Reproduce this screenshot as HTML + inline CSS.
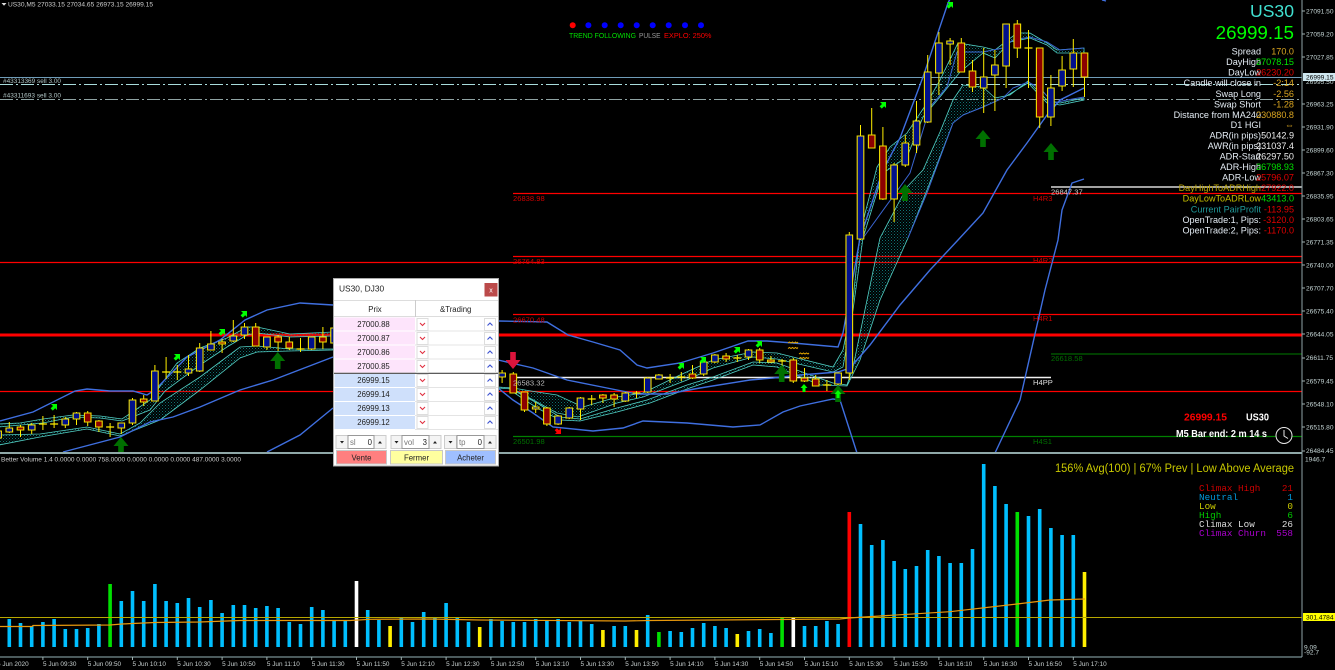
<!DOCTYPE html>
<html><head><meta charset="utf-8"><title>US30 M5</title>
<style>
html,body{margin:0;padding:0;background:#000;width:1335px;height:670px;overflow:hidden}
svg{display:block;font-family:"Liberation Sans",sans-serif}
.ax text{font-size:6.6px;fill:#c4d4d4}
.xl text{font-size:6.4px;fill:#c8d0d0}
.r text{font-size:9.1px;text-anchor:end}
.lv text{font-size:7.6px}
.lg text{font-family:"Liberation Mono",monospace;font-size:9.3px}
.d text{font-size:7.8px;fill:#222;text-anchor:middle}
</style></head><body>
<svg width="1335" height="670" viewBox="0 0 1335 670" xmlns="http://www.w3.org/2000/svg">
<defs>
<pattern id="dots" width="3" height="3" patternUnits="userSpaceOnUse"><rect x="0" y="0" width="1" height="1" fill="#0f7272"/><rect x="1.5" y="1.5" width="1" height="1" fill="#0a5656"/></pattern>
<path id="ua" d="M0 0L7.5 9H2.800V17H-2.800V9H-7.500Z" fill="#007000"/>
<path id="ga" d="M-3 -3H3V3L1.2 1.2-1.2 3.6-3.4 1.4-1 -1Z" fill="#00ff00"/>
</defs>
<rect width="1335" height="670" fill="#000"/>

<!-- horizontal levels -->
<g fill="none">
<path d="M0 77.5H1302" stroke="#6f9cb8"/>
<path d="M0 84.5H1302" stroke="#a8dcdc" stroke-width="0.9" stroke-dasharray="13 3 2 3"/>
<path d="M0 99.5H1302" stroke="#8fa3a3" stroke-width="0.9" stroke-dasharray="13 3 2 3"/>
<path d="M513 193.5H1302M513 256.5H1302M513 314.5H1302" stroke="#f00" stroke-width="1.2"/>
<path d="M0 262.5H1302M0 391.5H1302" stroke="#f00" stroke-width="1.2"/>
<path d="M0 335H1302" stroke="#f00" stroke-width="3"/>
<path d="M1051 187H1302" stroke="#d8d8d8" stroke-width="1.6"/>
<path d="M1051 354H1302" stroke="#006400" stroke-width="1.2"/>
<path d="M513 377.5H1051" stroke="#f0f0f0" stroke-width="1.4"/>
<path d="M513 436.5H1302" stroke="#008000" stroke-width="1.2"/>
</g>

<!-- ribbons -->
<g fill="url(#dots)" stroke="#52cfc4" stroke-width="0.8">
<path d="M-1 424L20 423 43 419 73 415 100 416 122 419 150 400 177 363 200 348 227 338 247 327 257 327 290 334 333 332L333 336 290 337 257 333 247 335 227 347 200 365 165 391 150 410 122 421 100 418 73 417 43 423-1 427Z"/>
<path d="M-1 435L40 434 87 427 120 434 140 423 160 403 200 377 240 347 257 346 290 349 333 349L333 350 290 351 257 352 240 358 200 390 160 420 120 436 87 429 40 437-1 445Z"/>
<path d="M498 387L513 388 537 392 557 395 583 407 617 397 643 393 680 375 713 360 753 352 777 353 833 367 843 350 853 300 860 233 877 167 890 147 907 133 927 103 940 80 958 43 983 47 995 50 1017 33 1030 33 1047 43 1057 50 1084 48L1084 53 1057 53 1047 45 1030 38 1010 42 995 58 983 53 960 72 940 97 923 117 907 157 883 173 863 238 853 310 843 367 833 372 777 359 753 357 713 368 687 380 643 397 617 403 578 417 557 413 537 402 513 389 498 388Z"/>
<path d="M513 390L537 403 560 417 580 419 617 408 647 400 687 385 713 377 753 362 777 363 833 383 847 385 853 367 880 238 907 187 923 170 940 132 953 100 963 85 983 87 995 98 1010 95 1028 81 1047 100 1060 103 1084 98L1084 100 1060 105 1047 103 1028 83 1003 98 983 107 963 115 953 123 927 190 908 238 880 300 860 360 847 386 820 385 777 367 753 365 713 380 687 389 650 403 617 412 580 421 560 420 537 408 513 392Z"/>
</g>

<!-- bollinger / MA -->
<g fill="none" stroke="#3f6fe0" stroke-width="1.4">
<path d="M0 421L33 412 75 391 87 389 110 391 133 391 147 395 155 390 187 357 220 340 245 320 267 310 300 303 333 305"/>
<path d="M498 321L547 322 568 335 593 342 620 350 637 365 647 368 680 363 713 353 748 341 767 341 793 343 838 347 843 333 849 300 860 238 883 170 900 138 923 77 948 3 951 -3"/>
<path d="M63 452L120 437 150 422 173 417 200 407 240 390 273 380 333 357"/>
<path d="M498 360L533 368 567 380 607 388 637 394 667 394 700 388 750 380 773 378 800 375 838 372 850 368 870 345 900 305 930 270 958 240 983 213 1007 170 1027 143 1047 115 1060 100 1084 88"/>
<path d="M267 452L300 435 333 408"/>
<path d="M498 388L513 400 533 413 553 427 593 431 623 428 643 421 687 423 733 427 760 425 783 412 800 406 833 399 840 400 857 453"/>
<path d="M995 453L1020 400 1045 290 1058 240 1062 210 1072 183 1084 179"/>
<path d="M1102 0L1106 1"/>
</g>
<path fill="none" stroke="#3a64d0" stroke-width="1" d="M863 238L910 173 930 107 947 87 957 52 983 52 1003 48 1013 40 1030 37 1047 42 1060 50 1084 48M908 238L927 193 953 123 963 115 983 107 1003 98 1013 88 1028 82 1040 88 1053 103 1067 100 1084 97"/>

<!-- wicks -->
<path fill="none" stroke="#ffee00" stroke-width="1" d="M9.3 422V433M20.5 425V437M31.7 423V434M42.9 416V430M54.1 415V428M65.3 417V428M76.5 412V425M87.7 411V426M98.9 420V432M110.1 423V437M121.3 423V434M132.5 398V425M143.7 395V406M154.9 365V401M166.1 357V379M177.3 365V380M188.5 355V376M199.7 343V372M210.9 331V350M222.1 339V353M233.3 320V342M244.5 323V339M255.7 323V346M266.9 337V350M278.1 335V351M289.3 337V350M300.5 338V352M311.7 337V350M322.9 327V349M502.1 370V383M513.3 372V393M524.5 392V412M535.7 402V413M546.9 407V426M558.1 415V425M569.3 407V419M580.5 397V420M591.7 395V405M602.9 394V403M614.1 393V407M625.3 392V402M636.5 391V398M647.7 377V393M658.9 374V379M670.1 374V383M681.3 372V381M692.5 365V379M703.7 357V376M714.9 354V363M726.1 353V362M737.3 355V362M748.5 349V360M759.7 348V363M770.9 356V363M782.1 359V368M793.3 358V383M804.5 368V382M815.7 375V386M826.9 380V391M838.1 373V385M849.3 232V380M860.5 125V240M871.7 108V148M882.9 127V200M894.1 163V222M905.3 135V167M916.5 101V153M927.7 55V123M938.9 32V95M950.1 38V65M961.3 38V72M972.5 60V92M983.7 48V113M994.9 50V111M1006.1 24V88M1017.3 20V58M1028.5 30V88M1039.7 48V128M1050.9 75V126M1062.1 56V91M1073.3 39V87M1084.5 53V97"/>
<!-- dojis -->
<path fill="none" stroke="#ffee00" stroke-width="1.2" d="M38.9 424h8M50.1 424h8M106.1 427h8M162.1 372h8M173.3 372h8M296.5 349h8M587.7 399h8M632.5 393h8M666.1 378h8M677.3 377h8M733.3 358h8M778.1 361h8M822.9 385h8M1024.5 48h8"/>
<!-- blue bodies -->
<path fill="#00108c" stroke="#f2e000" stroke-width="1.1" d="M-5.2 431h6.6v7h-6.6zM6 428h6.6v4h-6.6zM28.4 425h6.6v5h-6.6zM62 419h6.6v6h-6.6zM73.2 413h6.6v6h-6.6zM118 423h6.6v5h-6.6zM129.2 400h6.6v23h-6.6zM151.6 371h6.6v30h-6.6zM185.2 369h6.6v4h-6.6zM196.4 348h6.6v23h-6.6zM207.6 344h6.6v6h-6.6zM230 336h6.6v5h-6.6zM241.2 327h6.6v8h-6.6zM263.6 337h6.6v10h-6.6zM308.4 337h6.6v12h-6.6zM330.8 328h6.6v15h-6.6zM498.8 373h6.6v4h-6.6zM532.4 407h6.6v2h-6.6zM554.8 416h6.6v8h-6.6zM566 408h6.6v10h-6.6zM577.2 398h6.6v11h-6.6zM622 393h6.6v8h-6.6zM644.4 378h6.6v14h-6.6zM655.6 375h6.6v4h-6.6zM700.4 362h6.6v12h-6.6zM711.6 355h6.6v7h-6.6zM745.2 350h6.6v7h-6.6zM834.8 373h6.6v11h-6.6zM846 235h6.6v138h-6.6zM857.2 136h6.6v103h-6.6zM890.8 165h6.6v34h-6.6zM902 143h6.6v22h-6.6zM913.2 121h6.6v24h-6.6zM924.4 72h6.6v50h-6.6zM935.6 43h6.6v30h-6.6zM946.8 41h6.6v3h-6.6zM980.4 77h6.6v11h-6.6zM991.6 65h6.6v10h-6.6zM1002.8 24h6.6v42h-6.6zM1047.6 88h6.6v29h-6.6zM1058.8 70h6.6v16h-6.6zM1070 53h6.6v16h-6.6z"/>
<!-- red bodies -->
<path fill="#8c0000" stroke="#f2e000" stroke-width="1.1" d="M17.2 427h6.6v3h-6.6zM84.4 413h6.6v9h-6.6zM95.6 421h6.6v6h-6.6zM140.4 399h6.6v3h-6.6zM218.8 342h6.6v2h-6.6zM252.4 327h6.6v19h-6.6zM274.8 337h6.6v5h-6.6zM286 342h6.6v6h-6.6zM319.6 337h6.6v5h-6.6zM510 374h6.6v19h-6.6zM521.2 392h6.6v18h-6.6zM543.6 408h6.6v16h-6.6zM599.6 395h6.6v3h-6.6zM610.8 395h6.6v4h-6.6zM689.2 374h6.6v4h-6.6zM722.8 356h6.6v3h-6.6zM756.4 350h6.6v10h-6.6zM767.6 360h6.6v2h-6.6zM790 360h6.6v21h-6.6zM801.2 378h6.6v3h-6.6zM812.4 379h6.6v7h-6.6zM868.4 135h6.6v13h-6.6zM879.6 146h6.6v53h-6.6zM958 43h6.6v29h-6.6zM969.2 71h6.6v16h-6.6zM1014 24h6.6v24h-6.6zM1036.4 48h6.6v69h-6.6zM1081.2 53h6.6v24h-6.6z"/>

<!-- level labels -->
<g class="lv">
<text x="513" y="201" fill="#d00000">26838.98</text>
<text x="513" y="264" fill="#d00000">26764.83</text>
<text x="513" y="322.5" fill="#d00000">26670.48</text>
<text x="513" y="385.500" fill="#bbb">26583.32</text>
<text x="513" y="444" fill="#007000">26501.98</text>
<text x="1033" y="201" fill="#d00000">H4R3</text>
<text x="1033" y="263" fill="#d00000">H4R2</text>
<text x="1033" y="321" fill="#d00000">H4R1</text>
<text x="1033" y="385" fill="#ddd">H4PP</text>
<text x="1033" y="444" fill="#007000">H4S1</text>
<text x="1051" y="194.500" fill="#ccc">26847.37</text>
<text x="1051" y="361" fill="#007000">26618.58</text>
</g>

<!-- arrows -->
<use href="#ua" x="121" y="437"/><use href="#ua" x="277.7" y="352"/><use href="#ua" x="781.7" y="365"/><use href="#ua" x="838" y="385"/><use href="#ua" x="983" y="130"/><use href="#ua" x="1051" y="143"/><use href="#ua" x="905" y="184"/>
<path d="M513 369L505.5 360H510.2V352H515.8V360H520.5Z" fill="#dc143c"/>
<use href="#ga" x="54" y="407"/><use href="#ga" x="177" y="357"/><use href="#ga" x="222" y="332"/><use href="#ga" x="244" y="314"/><use href="#ga" x="681" y="366"/><use href="#ga" x="703" y="360"/><use href="#ga" x="737" y="350"/><use href="#ga" x="759" y="344"/><use href="#ga" x="950" y="5"/><use href="#ga" x="883" y="105"/>
<path d="M555 428h6v6l-1.7-1.7-2 2-2.2-2.2 2-2z" fill="#f00" transform="rotate(90 558 431)"/>
<path d="M804 384l3.5 4h-2v4h-3v-4h-2zM838 390l3.5 4h-2v4h-3v-4h-2z" fill="#00ff00"/>
<path fill="none" stroke="#e6a800" stroke-width="1" d="M788 343l1.5-1 1.500 1 1.500-1 1.500 1 1.500-1 1.500 1 1 -1M788 348.500l1.500-1 1.500 1 1.500-1 1.500 1 1.500-1 1.500 1 1-1M799 354l1.500-1 1.500 1 1.500-1 1.500 1 1.500-1 1.500 1 1-1M799 358.500l1.500-1 1.500 1 1.500-1 1.500 1 1.500-1 1.500 1 1-1"/>

<!-- top center dots -->
<circle cx="572.700" cy="25.300" r="3" fill="#f00"/>
<g fill="#0000ff"><circle cx="588.400" cy="25.300" r="3"/><circle cx="604.700" cy="25.300" r="3"/><circle cx="620.700" cy="25.300" r="3"/><circle cx="636.700" cy="25.300" r="3"/><circle cx="652.700" cy="25.300" r="3"/><circle cx="668.700" cy="25.300" r="3"/><circle cx="685" cy="25.300" r="3"/><circle cx="701" cy="25.300" r="3"/></g>
<g font-size="7.400"><text x="569" y="37.800" fill="#00e000" textLength="67" lengthAdjust="spacingAndGlyphs">TREND FOLLOWING</text><text x="639" y="37.800" fill="#999" textLength="21.500" lengthAdjust="spacingAndGlyphs">PULSE</text><text x="664" y="37.800" fill="#f00" textLength="47.500" lengthAdjust="spacingAndGlyphs">EXPLO: 250%</text></g>

<!-- top left -->
<path d="M1.500 3H6.500L4 5.800Z" fill="#ddd"/>
<text x="8" y="6.300" font-size="6.800" fill="#ccc" textLength="145" lengthAdjust="spacingAndGlyphs">US30,M5  27033.15 27034.65 26973.15 26999.15</text>
<text x="3" y="83" font-size="6.500" fill="#b0c4c4" textLength="58" lengthAdjust="spacingAndGlyphs">#43313369 sell 3.00</text>
<text x="3" y="97.500" font-size="6.500" fill="#b0c4c4" textLength="58" lengthAdjust="spacingAndGlyphs">#43311693 sell 3.00</text>

<!-- right info panel -->
<text x="1294" y="17" font-size="17.600" fill="#40e0d0" text-anchor="end">US30</text>
<text x="1294" y="39" font-size="18.800" fill="#00ff00" text-anchor="end">26999.15</text>
<g class="r" fill="#e4ecf4">
<text x="1261" y="54.500">Spread</text><text x="1261" y="65">DayHigh</text><text x="1261" y="75.500">DayLow</text><text x="1261" y="86">Candle will close in</text><text x="1261" y="97">Swap Long</text><text x="1261" y="107.500">Swap Short</text><text x="1261" y="118">Distance from MA240</text><text x="1261" y="128">D1 HGI</text><text x="1261" y="138.500">ADR(in pips)</text><text x="1261" y="149">AWR(in pips)</text><text x="1261" y="159.500">ADR-Start</text><text x="1261" y="170">ADR-High</text><text x="1261" y="180.500">ADR-Low</text>
<text x="1261" y="191" fill="#b8a000">DayHighToADRHigh</text><text x="1261" y="201.500" fill="#c8c000">DayLowToADRLow</text><text x="1261" y="212.500" fill="#1f9a9a">Current PairProfit</text>
<text x="1261" y="223">OpenTrade:1, Pips:</text><text x="1261" y="233.500">OpenTrade:2, Pips:</text>
</g>
<g class="r">
<text x="1294" y="54.500" fill="#daa520">170.0</text><text x="1294" y="65" fill="#00e800">27078.15</text><text x="1294" y="75.500" fill="#e00000">26230.20</text><text x="1294" y="86" fill="#daa520">-2:14</text><text x="1294" y="97" fill="#daa520">-2.56</text><text x="1294" y="107.500" fill="#daa520">-1.28</text><text x="1294" y="118" fill="#daa520">230880.8</text><text x="1294" y="128" fill="#daa520">⇔</text><text x="1294" y="138.500" fill="#eee">50142.9</text><text x="1294" y="149" fill="#eee">231037.4</text><text x="1294" y="159.500" fill="#eee">26297.50</text><text x="1294" y="170" fill="#00e000">26798.93</text><text x="1294" y="180.500" fill="#e00000">25796.07</text><text x="1294" y="191" fill="#e00000">-27922.0</text><text x="1294" y="201.500" fill="#00e000">43413.0</text><text x="1294" y="212.500" fill="#e00000">-113.95</text><text x="1294" y="223" fill="#e00000">-3120.0</text><text x="1294" y="233.500" fill="#e00000">-1170.0</text>
</g>

<!-- bottom right of main -->
<g font-weight="bold" font-size="10.500">
<text x="1184" y="420.500" fill="#f00" textLength="43" lengthAdjust="spacingAndGlyphs">26999.15</text>
<text x="1246" y="420.500" fill="#fff" textLength="23" lengthAdjust="spacingAndGlyphs">US30</text>
<text x="1176" y="437" fill="#fff" textLength="91" lengthAdjust="spacingAndGlyphs">M5 Bar end: 2 m 14 s</text>
</g>
<circle cx="1284" cy="435.500" r="8" fill="#000" stroke="#e8e8e8" stroke-width="1"/>
<path d="M1284 430V436L1288 438.500" fill="none" stroke="#e8e8e8"/>

<!-- frame -->
<path d="M0 453H1302" stroke="#8fa8a8" stroke-width="2"/>
<path d="M0 657H1302" stroke="#64787a" stroke-width="1.500"/>
<path d="M1302 0V657" stroke="#8fa3a8" stroke-width="1"/>

<!-- right axis -->
<path stroke="#9fb0b0" d="M1302 11h3M1302 34h3M1302 57h3M1302 104h3M1302 127h3M1302 150h3M1302 173h3M1302 196h3M1302 219h3M1302 242h3M1302 265h3M1302 288h3M1302 311h3M1302 334h3M1302 358h3M1302 381h3M1302 404h3M1302 427h3M1302 451h3"/>
<g class="ax">
<text x="1306" y="13.300">27091.50</text><text x="1306" y="36.300">27059.20</text><text x="1306" y="59.300">27027.85</text><text x="1306" y="84">26995.50</text><text x="1306" y="106.300">26963.25</text><text x="1306" y="129.300">26931.90</text><text x="1306" y="152.300">26899.60</text><text x="1306" y="175.300">26867.30</text><text x="1306" y="198.300">26835.95</text><text x="1306" y="221.300">26803.65</text><text x="1306" y="244.600">26771.35</text><text x="1306" y="267.300">26740.00</text><text x="1306" y="290.300">26707.70</text><text x="1306" y="313.300">26675.40</text><text x="1306" y="336.600">26644.05</text><text x="1306" y="360">26611.75</text><text x="1306" y="383.300">26579.45</text><text x="1306" y="406.300">26548.10</text><text x="1306" y="429.300">26515.80</text><text x="1306" y="453">26484.45</text>
<text x="1305" y="461.300">1946.7</text><text x="1304" y="649.300">9.09</text><text x="1304" y="654.300">-92.7</text>
</g>
<rect x="1303" y="73" width="32" height="8" fill="#cfe8f0"/>
<text x="1306" y="79.300" font-size="6.600" fill="#000">26999.15</text>
<rect x="1303" y="613" width="32" height="8" fill="#ffff00"/>
<text x="1306" y="619.300" font-size="6.600" fill="#000">301.4784</text>

<!-- subwindow title -->
<text x="1" y="461.500" font-size="6.600" fill="#ccc" textLength="240" lengthAdjust="spacingAndGlyphs">Better Volume 1.4 0.0000 0.0000 758.0000 0.0000 0.0000 0.0000 487.0000 3.0000</text>
<text x="1055" y="472" font-size="11.500" fill="#c8c800" textLength="239" lengthAdjust="spacingAndGlyphs">156% Avg(100) | 67% Prev | Low Above Average</text>
<g class="lg">
<text x="1199" y="491" fill="#cc0000">Climax High</text><text x="1293" y="491" fill="#cc0000" text-anchor="end">21</text>
<text x="1199" y="500" fill="#0099dd">Neutral</text><text x="1293" y="500" fill="#0099dd" text-anchor="end">1</text>
<text x="1199" y="509" fill="#cccc00">Low</text><text x="1293" y="509" fill="#cccc00" text-anchor="end">0</text>
<text x="1199" y="518" fill="#00cc00">High</text><text x="1293" y="518" fill="#00cc00" text-anchor="end">6</text>
<text x="1199" y="527" fill="#ddd">Climax Low</text><text x="1293" y="527" fill="#ddd" text-anchor="end">26</text>
<text x="1199" y="536" fill="#aa00cc">Climax Churn</text><text x="1293" y="536" fill="#aa00cc" text-anchor="end">558</text>
</g>

<!-- volume bars -->
<path fill="none" stroke="#00bfff" stroke-width="3.600" d="M9.300 647V619M20.500 647V623M31.700 647V626M42.900 647V622M54.100 647V619M65.300 647V629M76.500 647V629M87.700 647V628M98.900 647V624M121.300 647V601M132.500 647V591M143.700 647V601M154.900 647V584M166.100 647V601M177.300 647V603M188.500 647V598M199.700 647V607M210.900 647V600M222.100 647V613M233.300 647V605M244.500 647V605M255.700 647V608M266.900 647V606M278.100 647V608M289.300 647V622M300.500 647V624M311.700 647V607M322.900 647V610M334.100 647V620M345.300 647V620M367.700 647V610M378.900 647V620M401.300 647V618M412.500 647V622M423.700 647V612M434.900 647V617M446.100 647V603M457.300 647V618M468.500 647V622M490.900 647V619M502.100 647V621M513.300 647V622M524.500 647V622M535.700 647V619M546.900 647V621M558.100 647V619M569.300 647V622M580.500 647V621M591.700 647V624M614.100 647V626M625.300 647V626M647.700 647V615M670.100 647V631M681.300 647V632M692.500 647V628M703.700 647V623M714.900 647V626M726.100 647V628M748.500 647V631M759.700 647V629M770.900 647V633M804.500 647V626M815.700 647V626M826.900 647V621M838.100 647V624M860.500 647V524M871.700 647V545M882.900 647V540M894.100 647V561M905.300 647V569M916.500 647V566M927.700 647V550M938.900 647V556M950.100 647V563M961.300 647V563M972.500 647V549M983.700 647V464M994.900 647V486M1006.100 647V504M1028.500 647V516M1039.700 647V509M1050.900 647V528M1062.100 647V535M1073.300 647V535"/>
<path fill="none" stroke="#00e000" stroke-width="3.600" d="M110.100 647V584M658.900 647V632M782.100 647V617M1017.300 647V512"/>
<path fill="none" stroke="#ffffff" stroke-width="3.600" d="M356.500 647V581M793.300 647V618"/>
<path fill="none" stroke="#ffee00" stroke-width="3.600" d="M390.100 647V626M479.700 647V627M602.900 647V630M636.500 647V630M737.300 647V634M1084.500 647V572"/>
<path fill="none" stroke="#f00" stroke-width="3.600" d="M849.300 647V512"/>
<path d="M0 617.500H1302" stroke="#b8a800" stroke-width="1"/>
<path fill="none" stroke="#e8980c" stroke-width="1.200" d="M0 626.500L32 626.500 33 625.500 110 625 122 624 155 622.500 200 622 240 620.500 350 620.500 370 619.300 430 619 480 620 625 621 650 620.500 840 619 849 618 880 616 950 611.700 1017 604 1050 600 1085 599"/>

<!-- x axis -->
<path stroke="#9fb0b0" d="M42.900 657v3M87.700 657v3M132.500 657v3M177.300 657v3M222.100 657v3M266.900 657v3M311.700 657v3M356.500 657v3M401.300 657v3M446.100 657v3M490.900 657v3M535.700 657v3M580.500 657v3M625.300 657v3M670.100 657v3M714.900 657v3M759.700 657v3M804.500 657v3M849.300 657v3M894.100 657v3M938.900 657v3M983.700 657v3M1028.500 657v3M1073.300 657v3"/>
<g class="xl">
<text x="-3" y="666">5 Jun 2020</text><text x="43" y="666">5 Jun 09:30</text><text x="87.700" y="666">5 Jun 09:50</text><text x="132.500" y="666">5 Jun 10:10</text><text x="177.300" y="666">5 Jun 10:30</text><text x="222.100" y="666">5 Jun 10:50</text><text x="266.900" y="666">5 Jun 11:10</text><text x="311.700" y="666">5 Jun 11:30</text><text x="356.500" y="666">5 Jun 11:50</text><text x="401.300" y="666">5 Jun 12:10</text><text x="446.100" y="666">5 Jun 12:30</text><text x="490.900" y="666">5 Jun 12:50</text><text x="535.700" y="666">5 Jun 13:10</text><text x="580.500" y="666">5 Jun 13:30</text><text x="625.300" y="666">5 Jun 13:50</text><text x="670.100" y="666">5 Jun 14:10</text><text x="714.900" y="666">5 Jun 14:30</text><text x="759.700" y="666">5 Jun 14:50</text><text x="804.500" y="666">5 Jun 15:10</text><text x="849.300" y="666">5 Jun 15:30</text><text x="894.100" y="666">5 Jun 15:50</text><text x="938.900" y="666">5 Jun 16:10</text><text x="983.700" y="666">5 Jun 16:30</text><text x="1028.500" y="666">5 Jun 16:50</text><text x="1073.300" y="666">5 Jun 17:10</text>
</g>

<!-- dialog -->
<g class="d">
<rect x="333.500" y="278.500" width="165" height="187.500" fill="#fff" stroke="#aaa"/>
<text x="339" y="291.500" style="text-anchor:start;font-size:8.400px">US30, DJ30</text>
<rect x="484.500" y="283" width="13" height="13.500" fill="#bb4a4a"/>
<text x="491" y="292.500" style="fill:#fff;font-size:7px">x</text>
<path d="M334 300.500H498M334 316.500H498" stroke="#ddd" fill="none"/>
<path d="M415.500 300V317" stroke="#ccc" fill="none"/>
<text x="375" y="311.800">Prix</text><text x="455.700" y="311.800">&amp;Trading</text>
<path fill="#fde4fb" d="M334.500 317.500H415V330.500H334.500zM334.500 331.500H415V344.500H334.500zM334.500 345.500H415V358.500H334.500zM334.500 359.500H415V372.500H334.500z"/>
<path fill="#cfe0fb" d="M334.500 374H415V387H334.500zM334.500 388H415V401H334.500zM334.500 402H415V415H334.500zM334.500 416H415V429H334.500z"/>
<path stroke="#e4e4e4" fill="none" d="M415 331H498M415 345H498M415 359H498M415 387.500H498M415 401.500H498M415 415.500H498M415 429.500H498"/>
<path stroke="#444" stroke-width="1.200" d="M334 373.300H498" fill="none"/>
<text x="373.500" y="327">27000.88</text><text x="373.500" y="341">27000.87</text><text x="373.500" y="355">27000.86</text><text x="373.500" y="369">27000.85</text><text x="373.500" y="383">26999.15</text><text x="373.500" y="397">26999.14</text><text x="373.500" y="411">26999.13</text><text x="373.500" y="425">26999.12</text>
<path fill="#fff" stroke="#ddd" d="M417 318.500h11v12h-11zM417 332.500h11v12h-11zM417 346.500h11v12h-11zM417 360.500h11v12h-11zM417 374.500h11v12h-11zM417 388.500h11v12h-11zM417 402.500h11v12h-11zM417 416.500h11v12h-11zM484.500 318.500h11v12h-11zM484.500 332.500h11v12h-11zM484.500 346.500h11v12h-11zM484.500 360.500h11v12h-11zM484.500 374.500h11v12h-11zM484.500 388.500h11v12h-11zM484.500 402.500h11v12h-11zM484.500 416.500h11v12h-11z"/>
<path fill="none" stroke="#e03040" stroke-width="1.100" d="M420 323l2.500 2.500 2.500-2.500M420 337l2.500 2.500 2.500-2.500M420 351l2.500 2.500 2.500-2.500M420 365l2.500 2.500 2.500-2.500M420 379l2.500 2.500 2.500-2.500M420 393l2.500 2.500 2.500-2.500M420 407l2.500 2.500 2.500-2.500M420 421l2.500 2.500 2.500-2.500"/>
<path fill="none" stroke="#3a50d0" stroke-width="1.100" d="M487.500 325.500l2.500-2.500 2.500 2.500M487.500 339.500l2.500-2.500 2.500 2.500M487.500 353.500l2.500-2.500 2.500 2.500M487.500 367.500l2.500-2.500 2.500 2.500M487.500 381.500l2.500-2.500 2.500 2.500M487.500 395.500l2.500-2.500 2.500 2.500M487.500 409.500l2.500-2.500 2.500 2.500M487.500 423.500l2.500-2.500 2.500 2.500"/>
<!-- spinners -->
<path fill="#f4f4f4" stroke="#ccc" d="M336 435.500h12v13h-12zM374 435.500h12v13h-12zM391 435.500h11v13h-11zM429 435.500h12v13h-12zM444.500 435.500h12v13h-12zM484 435.500h12v13h-12z"/>
<path fill="#fff" stroke="#999" d="M348 435.500h26v13h-26zM402 435.500h27v13h-27zM457 435.500h27v13h-27z"/>
<path fill="#222" d="M340 441h4l-2 2.500zM378 443.500h4l-2-2.500zM394.500 441h4l-2 2.500zM433 443.500h4l-2-2.500zM448.500 441h4l-2 2.500zM488 443.500h4l-2-2.500z"/>
<text x="350" y="445" style="text-anchor:start;fill:#777">sl</text><text x="372" y="445" style="text-anchor:end">0</text>
<text x="404" y="445" style="text-anchor:start;fill:#777">vol</text><text x="427" y="445" style="text-anchor:end">3</text>
<text x="459" y="445" style="text-anchor:start;fill:#777">tp</text><text x="482" y="445" style="text-anchor:end">0</text>
<!-- buttons -->
<rect x="336.500" y="450.500" width="50" height="13.500" fill="#ff7f7f" stroke="#c8c8c8"/>
<rect x="390.500" y="450.500" width="52" height="13.500" fill="#ffff9f" stroke="#c8c8c8"/>
<rect x="445.500" y="450.500" width="50" height="13.500" fill="#9fbfff" stroke="#c8c8c8"/>
<text x="361.500" y="460.500">Vente</text><text x="416.500" y="460.500">Fermer</text><text x="470.500" y="460.500">Acheter</text>
</g>
</svg>
</body></html>
